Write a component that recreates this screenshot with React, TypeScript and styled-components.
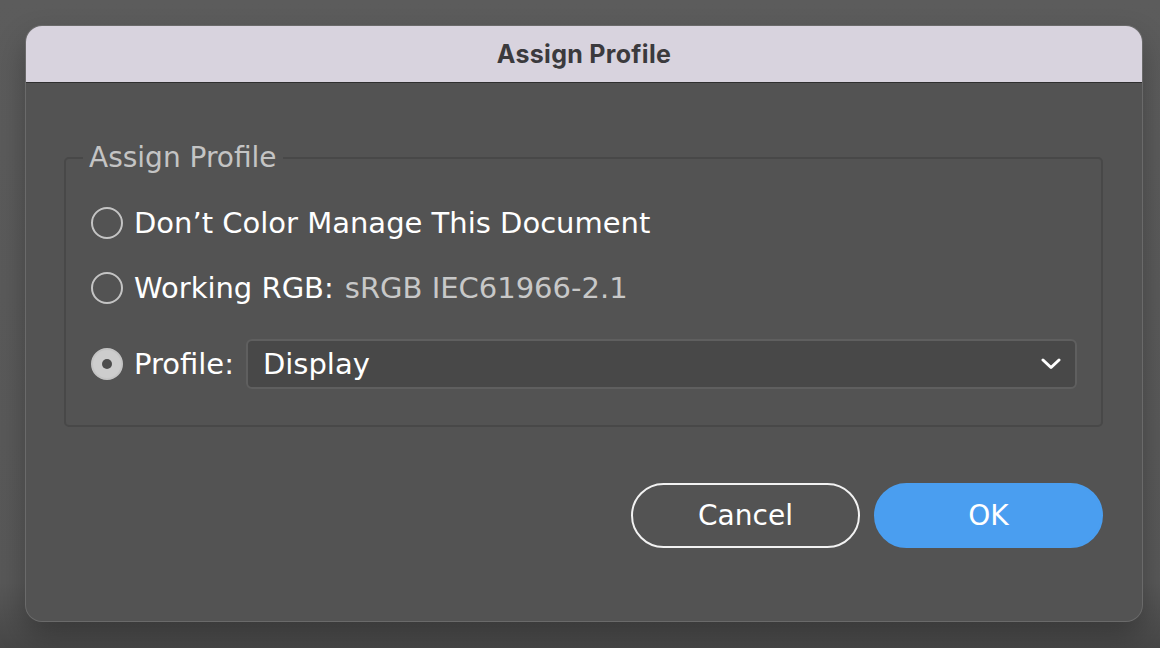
import React from 'react'
import styled, { createGlobalStyle } from 'styled-components'

const GlobalStyle = createGlobalStyle`
    html, body {
        margin: 0;
        padding: 0;
        background: #5b5b5b;
    }
    body {
        font-family: "DejaVu Sans", "Noto Sans", sans-serif;
    }
`

const Page = styled.div`
    width: 1160px;
    height: 648px;
    padding: 26px 0 0 26px;
    box-sizing: border-box;
    background: linear-gradient(180deg, #5c5c5c 0%, #585858 90%, #474747 100%);
    overflow: hidden;
`

const Dialog = styled.div`
    width: 1116px;
    height: 595px;
    background: #535353;
    border-radius: 16px;
    overflow: hidden;
    box-shadow: 0 0 0 1px #6a6a6a, 0 14px 30px rgba(0, 0, 0, 0.28);
    display: flex;
    flex-direction: column;
`

const TitleBar = styled.div`
    height: 56px;
    flex: none;
    background: #d8d3de;
    border-bottom: 1px solid #2f2f2f;
    display: flex;
    align-items: center;
    justify-content: center;

    h1 {
        margin: 0;
        font-family: Inter, "Liberation Sans", sans-serif;
        font-weight: 700;
        font-size: 25px;
        color: #3b3a3d;
        letter-spacing: 0.3px;
    }
`

const Body = styled.div`
    padding: 58px 39px 0 38px;
    display: flex;
    flex-direction: column;
`

const GroupBox = styled.fieldset`
    margin: 0;
    padding: 0 24px 0 25px;
    height: 286px;
    box-sizing: border-box;
    border: 2px solid #484848;
    border-radius: 5px;
    display: flex;
    flex-direction: column;

    legend {
        margin-left: -8px;
        padding: 0 6px;
        font-size: 28px;
        color: #c4c4c4;
        line-height: 34px;
    }
`

const Row = styled.div<{ $top: number }>`
    display: flex;
    align-items: center;
    margin-top: ${p => p.$top}px;
    height: 50px;
`

const Radio = styled.span<{ $checked?: boolean }>`
    flex: none;
    width: 32px;
    height: 32px;
    box-sizing: border-box;
    border-radius: 50%;
    border: 2px solid #c4c4c4;
    background: ${p => (p.$checked ? '#cdcdcd' : 'transparent')};
    margin-right: 11px;
    display: flex;
    align-items: center;
    justify-content: center;

    &::after {
        content: '';
        display: ${p => (p.$checked ? 'block' : 'none')};
        width: 10px;
        height: 10px;
        border-radius: 50%;
        background: #4c4c4c;
    }
`

const Label = styled.span`
    font-size: 29px;
    color: #ffffff;
    white-space: nowrap;
`

const Value = styled.span`
    font-size: 29px;
    color: #c8c8c8;
    margin-left: 11px;
    white-space: nowrap;
`

const Select = styled.div`
    flex: 1;
    margin-left: 12px;
    height: 50px;
    box-sizing: border-box;
    background: #484848;
    border: 2px solid #5f5f5f;
    border-radius: 6px;
    display: flex;
    align-items: center;
    padding: 0 14px 0 15px;
    font-size: 29px;
    color: #ffffff;

    span {
        flex: 1;
    }
`

const Buttons = styled.div`
    margin-top: 56px;
    display: flex;
    justify-content: flex-end;
    gap: 14px;
`

const Button = styled.button<{ $primary?: boolean }>`
    width: 229px;
    height: 65px;
    border-radius: 33px;
    font-family: "DejaVu Sans", "Noto Sans", sans-serif;
    font-size: 28px;
    color: #ffffff;
    cursor: pointer;
    background: ${p => (p.$primary ? '#4a9ef0' : 'transparent')};
    border: ${p => (p.$primary ? '2px solid #4a9ef0' : '2px solid #f2f2f2')};
`

const Chevron = () => (
    <svg width="20" height="12" viewBox="0 0 20 12">
        <path d="M2 2 L10 9.5 L18 2" fill="none" stroke="#ffffff" strokeWidth="3" strokeLinecap="round" strokeLinejoin="round" />
    </svg>
)

const App: React.FC = () => (
    <Page>
        <GlobalStyle />
        <Dialog>
            <TitleBar>
                <h1>Assign Profile</h1>
            </TitleBar>
            <Body>
                <GroupBox>
                    <legend>Assign Profile</legend>
                    <Row $top={23}>
                        <Radio />
                        <Label>Don’t Color Manage This Document</Label>
                    </Row>
                    <Row $top={15}>
                        <Radio />
                        <Label>Working RGB:</Label>
                        <Value>sRGB IEC61966-2.1</Value>
                    </Row>
                    <Row $top={26}>
                        <Radio $checked />
                        <Label>Profile:</Label>
                        <Select>
                            <span>Display</span>
                            <Chevron />
                        </Select>
                    </Row>
                </GroupBox>
                <Buttons>
                    <Button>Cancel</Button>
                    <Button $primary>OK</Button>
                </Buttons>
            </Body>
        </Dialog>
    </Page>
)

export default App
